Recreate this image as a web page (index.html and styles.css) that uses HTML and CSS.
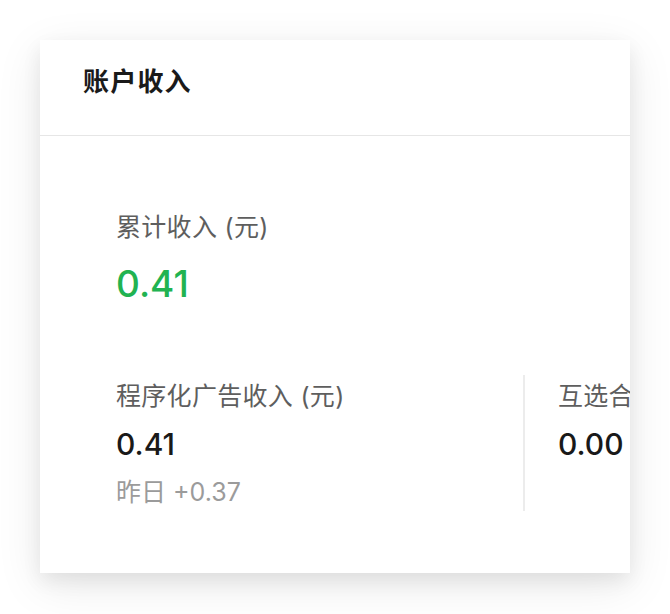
FILE: index.html
```html
<!DOCTYPE html>
<html lang="zh-CN">
<head>
<meta charset="utf-8">
<title>账户收入</title>
<link rel="stylesheet" href="styles.css">
</head>
<body>
<section class="card">
  <header class="card-head">账户收入</header>
  <div class="card-body">
    <div class="total">
      <div class="label">累计收入 (元)</div>
      <div class="total-num">0.41</div>
    </div>
    <div class="cols">
      <div class="col col-first">
        <div class="label">程序化广告收入 (元)</div>
        <div class="num">0.41</div>
        <div class="sub">昨日 +0.37</div>
      </div>
      <div class="col col-next">
        <div class="label">互选合作收入 (元)</div>
        <div class="num">0.00</div>
      </div>
    </div>
  </div>
</section>
</body>
</html>
```

FILE: styles.css
```css
html, body {
  margin: 0;
  padding: 0;
  background: #ffffff;
}
body {
  font-family: "Inter", "Noto Sans CJK SC", sans-serif;
  width: 670px;
  height: 614px;
  overflow: hidden;
}
.card {
  margin: 40px 0 0 40px;
  width: 590px;
  background: #ffffff;
  overflow: hidden;
  box-shadow: 0 8px 18px rgba(0, 0, 0, 0.07), 0 12px 44px rgba(0, 0, 0, 0.09);
}
.card-head {
  height: 96px;
  box-sizing: border-box;
  padding: 24px 0 0 43px;
  font-family: "Noto Sans CJK SC", sans-serif;
  font-size: 26px;
  font-weight: 700;
  line-height: 32px;
  letter-spacing: 1.2px;
  color: #1a1a1a;
  border-bottom: 1.5px solid #e6e6e6;
}
.card-body {
  padding: 73px 0 62px 76px;
}
.label {
  font-family: "Inter", "Noto Sans CJK SC", sans-serif;
  font-size: 25px;
  line-height: 36px;
  letter-spacing: 0.3px;
  color: #5e5e5e;
  white-space: nowrap;
}
.total-num {
  margin-top: 15px;
  font-size: 37px;
  font-weight: 500;
  line-height: 48px;
  color: #21b351;
}
.cols {
  margin-top: 67px;
  display: flex;
  flex-wrap: nowrap;
}
.col {
  flex: none;
  padding: 3px 0 2px;
}
.col-first {
  width: 407px;
}
.col-next {
  border-left: 2px solid #ececec;
  padding-left: 33px;
}
.num {
  margin-top: 10px;
  font-size: 30px;
  font-weight: 500;
  line-height: 40px;
  color: #191919;
}
.sub {
  margin-top: 11px;
  font-size: 25px;
  line-height: 34px;
  color: #9b9b9b;
  white-space: nowrap;
}
```
